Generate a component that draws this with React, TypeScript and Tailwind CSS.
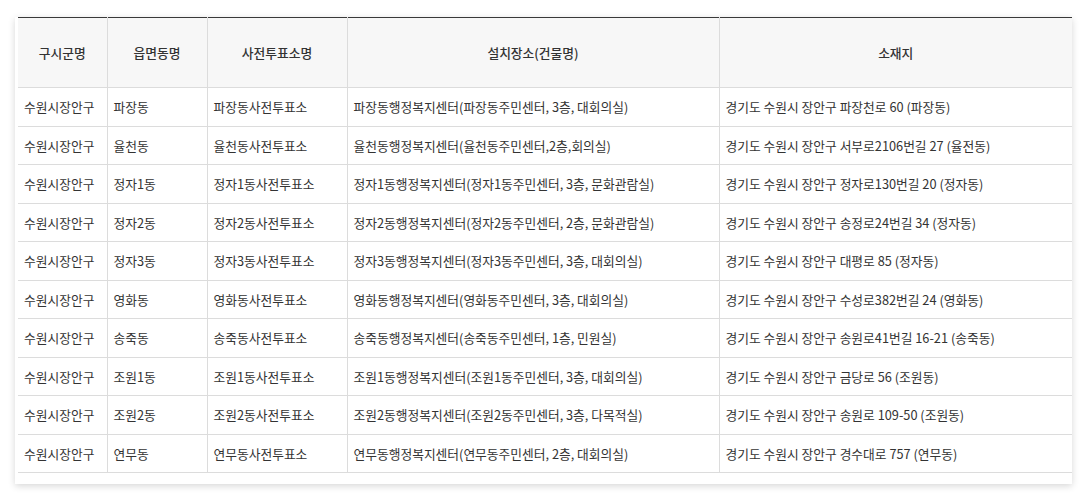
import React from "react";

const rows: string[][] = [
  ["수원시장안구", "파장동", "파장동사전투표소", "파장동행정복지센터(파장동주민센터, 3층, 대회의실)", "경기도 수원시 장안구 파장천로 60 (파장동)"],
  ["수원시장안구", "율천동", "율천동사전투표소", "율천동행정복지센터(율천동주민센터,2층,회의실)", "경기도 수원시 장안구 서부로2106번길 27 (율전동)"],
  ["수원시장안구", "정자1동", "정자1동사전투표소", "정자1동행정복지센터(정자1동주민센터, 3층, 문화관람실)", "경기도 수원시 장안구 정자로130번길 20 (정자동)"],
  ["수원시장안구", "정자2동", "정자2동사전투표소", "정자2동행정복지센터(정자2동주민센터, 2층, 문화관람실)", "경기도 수원시 장안구 송정로24번길 34 (정자동)"],
  ["수원시장안구", "정자3동", "정자3동사전투표소", "정자3동행정복지센터(정자3동주민센터, 3층, 대회의실)", "경기도 수원시 장안구 대평로 85 (정자동)"],
  ["수원시장안구", "영화동", "영화동사전투표소", "영화동행정복지센터(영화동주민센터, 3층, 대회의실)", "경기도 수원시 장안구 수성로382번길 24 (영화동)"],
  ["수원시장안구", "송죽동", "송죽동사전투표소", "송죽동행정복지센터(송죽동주민센터, 1층, 민원실)", "경기도 수원시 장안구 송원로41번길 16-21 (송죽동)"],
  ["수원시장안구", "조원1동", "조원1동사전투표소", "조원1동행정복지센터(조원1동주민센터, 3층, 대회의실)", "경기도 수원시 장안구 금당로 56 (조원동)"],
  ["수원시장안구", "조원2동", "조원2동사전투표소", "조원2동행정복지센터(조원2동주민센터, 3층, 다목적실)", "경기도 수원시 장안구 송원로 109-50 (조원동)"],
  ["수원시장안구", "연무동", "연무동사전투표소", "연무동행정복지센터(연무동주민센터, 2층, 대회의실)", "경기도 수원시 장안구 경수대로 757 (연무동)"],
];

const headers = ["구시군명", "읍면동명", "사전투표소명", "설치장소(건물명)", "소재지"];
const widths = ["w-[89px]", "w-[100px]", "w-[140px]", "w-[372px]", "w-[353px]"];

export default function App() {
  return (
    <div
      className="w-[1087px] h-[498px] bg-white pt-[17px] pl-[15px]"
      style={{ fontFamily: '"Noto Sans CJK KR", "Noto Sans", sans-serif' }}
    >
      <div className="w-[1057px] bg-white pl-[3px] pb-[11px] shadow-[0_2px_7px_rgba(0,0,0,0.16)]">
        <table className="w-[1054px] table-fixed border-collapse text-[12.75px] text-[#333]">
          <colgroup>
            {widths.map((w, i) => (
              <col key={i} className={w} />
            ))}
          </colgroup>
          <thead>
            <tr className="h-[70px] bg-[#f7f7f7] border-t border-t-[#3a3a3a] border-b border-b-[#dcdcdc]">
              {headers.map((h, i) => (
                <th
                  key={i}
                  className={`font-medium text-center text-[#333] ${i > 0 ? "border-l border-l-[#dcdcdc]" : ""}`}
                >
                  {h}
                </th>
              ))}
            </tr>
          </thead>
          <tbody>
            {rows.map((r, ri) => (
              <tr key={ri} className="h-[38.5px] border-b border-b-[#dcdcdc]">
                {r.map((c, ci) => (
                  <td
                    key={ci}
                    className={`pl-[6px] pr-[4px] whitespace-nowrap ${ci > 0 ? "border-l border-l-[#dcdcdc]" : ""}`}
                  >
                    {c}
                  </td>
                ))}
              </tr>
            ))}
          </tbody>
        </table>
      </div>
    </div>
  );
}
